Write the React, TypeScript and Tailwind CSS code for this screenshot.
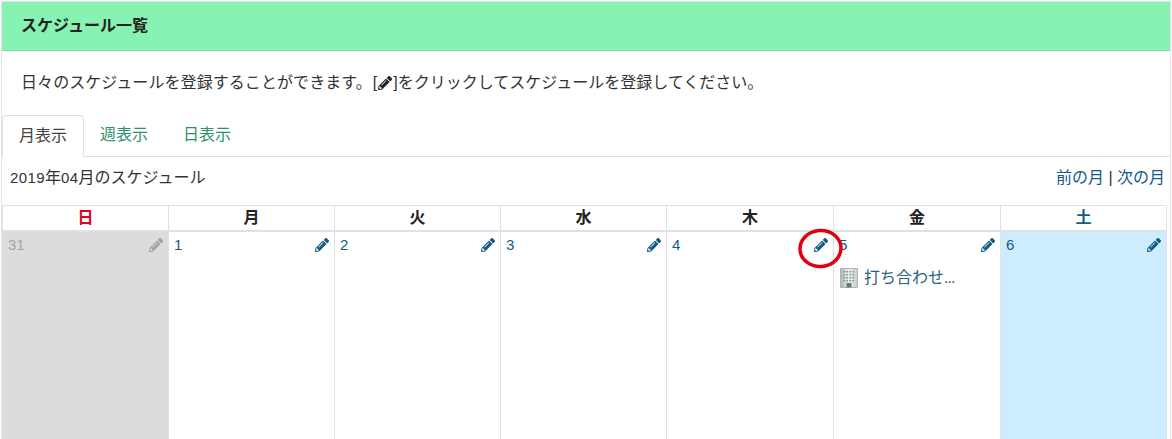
import React from 'react';
import { FaPencilAlt } from 'react-icons/fa';

const weekdays = [
  { label: '日', color: 'text-[#e2001a]' },
  { label: '月', color: 'text-[#222]' },
  { label: '火', color: 'text-[#222]' },
  { label: '水', color: 'text-[#222]' },
  { label: '木', color: 'text-[#222]' },
  { label: '金', color: 'text-[#222]' },
  { label: '土', color: 'text-[#155a85]' },
];

const days = [
  { day: '31', muted: true },
  { day: '1' },
  { day: '2' },
  { day: '3' },
  { day: '4' },
  { day: '5', event: '打ち合わせ' },
  { day: '6', saturday: true },
];

const Building = () => (
  <svg width="18" height="20" viewBox="0 0 18 20" className="shrink-0">
    <defs>
      <linearGradient id="bld" x1="0" x2="1" y1="0" y2="0">
        <stop offset="0" stopColor="#a9b2b3" />
        <stop offset="0.5" stopColor="#eef0f0" />
        <stop offset="1" stopColor="#c6cccc" />
      </linearGradient>
    </defs>
    <rect x="0.5" y="0.5" width="17" height="19" fill="url(#bld)" stroke="#b0b7b8" />
    {[3, 6, 9, 12].map((y) =>
      [3.5, 6.5, 9.5, 12.5].map((x) => <rect key={`${x}-${y}`} x={x} y={y} width="1.4" height="1.4" fill="#7b8586" />),
    )}
    <rect x="6.5" y="15" width="5" height="4.5" fill="#6d7778" />
  </svg>
);

const DayCell = ({ day, muted, saturday, event }: { day: string; muted?: boolean; saturday?: boolean; event?: string }) => (
  <div
    className={`relative min-w-0 border-r border-[#dfe1e6] pt-[3px] pr-[4px] pl-[5px] last:border-r-0 ${
      muted ? 'bg-[#dcdcdc]' : saturday ? 'bg-[#cdecfe]' : 'bg-white'
    }`}
  >
    <div className={`flex items-start justify-between text-[15px] leading-[20px] ${muted ? 'text-[#a3a3a3]' : 'text-[#155a85]'}`}>
      <span>{day}</span>
      <FaPencilAlt className="mt-[3px] mr-[1px] text-[14px]" />
    </div>
    {event && (
      <div className="mt-[12px] ml-[1px] flex items-center gap-[6px] text-[16px] leading-[22px] text-[#2b6280]">
        <Building />
        <span>
          {event}
          <span className="tracking-[-1px]">...</span>
        </span>
      </div>
    )}
  </div>
);

export default function App() {
  return (
    <div className="relative h-[439px] w-[1172px] overflow-hidden bg-white pt-[1px] font-['Liberation_Sans','Noto_Sans_CJK_JP',sans-serif] text-[#333]">
      <div className="mx-[1px] flex h-[438px] flex-col border-x border-[#e4e5e9]">
        <div className="flex h-[50px] items-center border-y border-[#7cdda5] border-t-[#d8e8df] bg-[#86f3b3] pl-[19px] text-[16px] font-bold text-[#222]">
          スケジュール一覧
        </div>

        <p className="flex h-[64px] items-center pl-[19px] text-[16px] text-[#333]">
          <span className="tracking-[0.07px]">日々のスケジュールを登録することができます。</span>
          <span className="ml-[1px]">[</span>
          <FaPencilAlt className="mx-[1px] text-[14px] text-[#222]" />
          ]をクリックしてスケジュールを登録してください。
        </p>

        <div className="flex h-[42px] items-end border-b border-[#dfe1e6] text-[16px] text-[#2f8f6b]">
          <div className="-mb-px flex h-[42px] w-[82px] items-center justify-center rounded-t-[4px] border border-[#dfe1e6] border-b-white bg-white text-[#444]">
            月表示
          </div>
          <div className="flex h-[42px] w-[82px] items-center justify-center pr-[2px]">週表示</div>
          <div className="flex h-[42px] w-[82px] items-center justify-center">日表示</div>
        </div>

        <div className="flex h-[48px] items-center justify-between pr-[5px] pb-[6px] pl-[8px] text-[16px]">
          <span className="text-[#333]">
            <span className="text-[15px] tracking-[0.4px]">2019</span>年<span className="text-[15px] tracking-[0.4px]">04</span>月のスケジュール
          </span>
          <span className="text-[#155a85]">
            前の月 <span className="text-[#333]">|</span> 次の月
          </span>
        </div>

        <div className="mr-[3px] flex min-h-0 flex-1 flex-col border-x border-t border-[#dfe1e6]">
          <div className="grid h-[26px] grid-cols-[166px_166px_166px_166px_167px_167px_1fr] border-b-[2px] border-[#dfe1e6]">
            {weekdays.map((w) => (
              <div
                key={w.label}
                className={`flex items-center justify-center border-r border-[#dfe1e6] text-[16px] font-bold last:border-r-0 ${w.color}`}
              >
                {w.label}
              </div>
            ))}
          </div>
          <div className="grid min-h-0 flex-1 grid-cols-[166px_166px_166px_166px_167px_167px_1fr]">
            {days.map((d) => (
              <DayCell key={d.day} {...d} />
            ))}
          </div>
        </div>
      </div>

      {/* red annotation circle */}
      <svg width="72" height="48" viewBox="0 0 72 48" className="absolute top-[227px] left-[790px]">
        <ellipse cx="30.5" cy="21.5" rx="20.5" ry="18" fill="none" stroke="#e2000f" strokeWidth="3.5" transform="rotate(-5 30.5 21.5)" />
      </svg>
    </div>
  );
}
